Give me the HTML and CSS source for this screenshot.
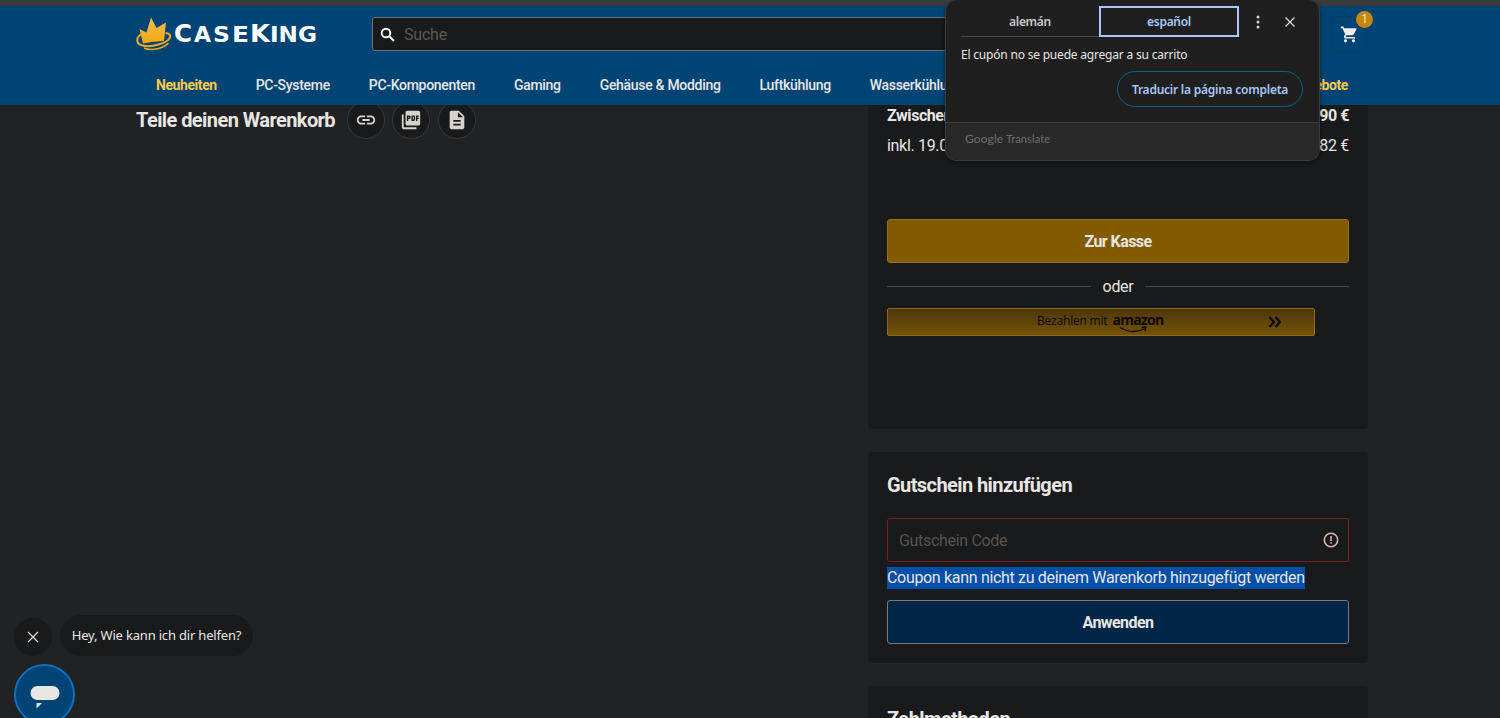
FILE: index.html
```
<!DOCTYPE html>
<html lang="de">
<head>
    <meta charset="UTF-8">
    <meta name="viewport" content="width=device-width, initial-scale=1.0">
    <title>Warenkorb - Caseking</title>
    <link rel="stylesheet" href="styles.css">
</head>
<body>
    <header class="header">
        <div class="header-top">
            <a class="logo">
                <svg width="182" height="36" viewBox="0 0 182 36">
                    <defs>
                        <linearGradient id="gold" x1="0" y1="0" x2="0" y2="1">
                            <stop offset="0" stop-color="#f0bc55"/>
                            <stop offset="1" stop-color="#f5a80c"/>
                        </linearGradient>
                    </defs>
                    <path fill="url(#gold)" d="M7 27.500 L3.500 13 L10.500 16.500 L15 1.500 L20.500 12 L30 6.500 L28 25 Q17 25 7 27.500Z"/>
                    <path fill="none" stroke="#efab1c" stroke-width="2" d="M5.500 18 C-0.500 22 0 28 6.500 29.500 C15 32 32 27 34 21.500 C35 19 32.500 17 29.500 17"/>
                    <path fill="none" stroke="#efab1c" stroke-width="1.500" d="M8 32 C16 35.500 28 32 32.500 27"/>
                    <g class="logo-text">
                        <text x="38" y="25.500" font-size="25" textLength="18" lengthAdjust="spacingAndGlyphs">C</text>
                        <text x="58" y="25.500" font-size="21" textLength="17" lengthAdjust="spacingAndGlyphs">A</text>
                        <text x="77" y="25.500" font-size="21" textLength="17" lengthAdjust="spacingAndGlyphs">S</text>
                        <text x="96" y="25.500" font-size="21" textLength="17" lengthAdjust="spacingAndGlyphs">E</text>
                        <text x="114" y="25.500" font-size="25" textLength="20" lengthAdjust="spacingAndGlyphs">K</text>
                        <text x="134" y="25.500" font-size="21" textLength="47" lengthAdjust="spacingAndGlyphs">ING</text>
                    </g>
                </svg>
            </a>
            <div class="search">
                <svg width="16" height="16" viewBox="0 0 16 16" fill="none" stroke="#fff" stroke-width="1.900"><circle cx="6" cy="7" r="4.300"/><path d="M9 10 L14 15"/></svg>
                <span>Suche</span>
            </div>
            <a class="cart">
                <svg width="19" height="19" viewBox="0 0 24 24" fill="#f0eeea"><path d="M7 18c-1.100 0-1.990.9-1.990 2S5.900 22 7 22s2-.9 2-2-.9-2-2-2zM1 2v2h2l3.600 7.590-1.350 2.450c-.16.280-.25.610-.25.960 0 1.100.9 2 2 2h12v-2H7.420c-.14 0-.25-.11-.25-.25l.03-.12.9-1.630h7.450c.75 0 1.410-.41 1.750-1.030l3.580-6.490A1 1 0 0 0 20 4H5.210l-.94-2H1zm16 16c-1.100 0-1.990.9-1.990 2s.89 2 1.990 2 2-.9 2-2-.9-2-2-2z"/></svg>
                <span class="badge">1</span>
            </a>
        </div>
        <nav class="nav">
            <a class="highlight">Neuheiten</a>
            <a>PC-Systeme</a>
            <a>PC-Komponenten</a>
            <a>Gaming</a>
            <a>Gehäuse &amp; Modding</a>
            <a>Luftkühlung</a>
            <a>Wasserkühlung</a>
            <a class="highlight last">Angebote</a>
        </nav>
    </header>

    <main class="main">
        <section class="share">
            <h2>Teile deinen Warenkorb</h2>
            <button class="round"><svg width="22" height="22" viewBox="0 0 24 24"><path d="M3.900 12c0-1.710 1.390-3.100 3.100-3.100h4V7H7c-2.760 0-5 2.240-5 5s2.240 5 5 5h4v-1.900H7c-1.710 0-3.100-1.390-3.100-3.100zM8 13h8v-2H8v2zm9-6h-4v1.900h4c1.710 0 3.100 1.390 3.100 3.100s-1.390 3.100-3.100 3.100h-4V17h4c2.760 0 5-2.240 5-5s-2.240-5-5-5z"/></svg></button>
            <button class="round"><svg width="22" height="22" viewBox="0 0 24 24"><path d="M20 2H8c-1.100 0-2 .9-2 2v12c0 1.100.9 2 2 2h12c1.100 0 2-.9 2-2V4c0-1.100-.9-2-2-2zm-8.500 7.500c0 .83-.67 1.500-1.500 1.500H9v2H7.500V7H10c.83 0 1.500.67 1.500 1.500v1zm5 2c0 .83-.67 1.500-1.500 1.500h-2.500V7H15c.83 0 1.500.67 1.500 1.500v3zm4-3H19v1h1.500V11H19v2h-1.500V7h3v1.500zM9 9.500h1v-1H9v1zM4 6H2v14c0 1.100.9 2 2 2h14v-2H4V6zm10 5.500h1v-3h-1v3z"/></svg></button>
            <button class="round"><svg width="22" height="22" viewBox="0 0 24 24"><path d="M14 2H6c-1.100 0-1.990.9-1.990 2L4 20c0 1.100.89 2 1.990 2H18c1.100 0 2-.9 2-2V8l-6-6zm2 16H8v-2h8v2zm0-4H8v-2h8v2zm-3-5V3.500L18.500 9H13z"/></svg></button>
        </section>

        <aside class="sidebar">
            <section class="card summary">
                <div class="row total"><span>Zwischensumme</span><span>90 €</span></div>
                <div class="row"><span>inkl. 19.0%</span><span>82 €</span></div>
                <button class="btn checkout">Zur Kasse</button>
                <div class="divider">oder</div>
                <button class="amazon">
                    <span class="amazon-label">Bezahlen mit</span>
                    <span class="amazon-logo">amazon<svg width="30" height="7" viewBox="0 0 30 7" fill="none" stroke="#0c0a05" stroke-width="1.300"><path d="M1 1.500 Q14 9 26 2.500 M22.500 1.500 L27 1 L26 5"/></svg></span>
                    <svg class="amazon-arrows" width="14" height="12" viewBox="0 0 14 12" fill="none" stroke="#0c0a05" stroke-width="2.200"><path d="M1.500 1 L6 6 L1.500 11 M7.500 1 L12 6 L7.500 11"/></svg>
                </button>
            </section>

            <section class="card coupon">
                <h2>Gutschein hinzufügen</h2>
                <div class="input">
                    <span>Gutschein Code</span>
                    <svg width="16" height="16" viewBox="0 0 16 16" fill="none" stroke="#e6b3b5" stroke-width="1.500"><circle cx="8" cy="8" r="6.700"/><path d="M8 4 V9 M8 10.200 V11.800"/></svg>
                </div>
                <p class="error"><span>Coupon kann nicht zu deinem Warenkorb hinzugefügt werden</span></p>
                <button class="btn apply">Anwenden</button>
            </section>

            <section class="card">
                <h2>Zahlmethoden</h2>
            </section>
        </aside>
    </main>

    <div class="translate">
        <div class="tabs">
            <span class="tab">alemán</span>
            <span class="tab active">español</span>
            <svg class="dots" width="4" height="14" viewBox="0 0 4 14" fill="#d5d5d5"><circle cx="2" cy="2" r="1.500"/><circle cx="2" cy="7" r="1.500"/><circle cx="2" cy="12" r="1.500"/></svg>
            <svg class="close" width="10" height="10" viewBox="0 0 10 10" stroke="#d5d5d5" stroke-width="1.300"><path d="M.5 .5 L9.500 9.500 M9.500 .5 L.5 9.500"/></svg>
        </div>
        <p class="translation">El cupón no se puede agregar a su carrito</p>
        <button class="translate-page">Traducir la página completa</button>
        <div class="translate-footer"><span class="google">Google</span> <span>Translate</span></div>
    </div>

    <div class="chat">
        <div class="chat-row">
            <button class="chat-close"><svg width="12" height="12" viewBox="0 0 12 12" stroke="#e0ddd8" stroke-width="1.200"><path d="M1 1 L11 11 M11 1 L1 11"/></svg></button>
            <div class="chat-message">Hey, Wie kann ich dir helfen?</div>
        </div>
        <button class="chat-open">
            <svg width="30" height="24" viewBox="0 0 30 24" fill="#e8e6e3"><rect x="0.500" y="1" width="29" height="14" rx="7"/><path d="M6.500 18 H12 L6.500 23.500Z"/></svg>
        </button>
    </div>
</body>
</html>
```
FILE: styles.css
```
* {
    box-sizing: border-box;
}
body {
    margin: 0;
    height: 718px;
    overflow: hidden;
    font-family: Roboto, sans-serif;
    font-size: 16px;
    letter-spacing: -0.32px;
    color: #e8e6e3;
    background: #202223;
    border-top: 6px solid #3b3b3d;
}
button {
    padding: 0;
    font-family: inherit;
    letter-spacing: inherit;
    color: inherit;
}
h2 {
    margin: 0;
    font-size: 20px;
    line-height: 24px;
    font-weight: 700;
    letter-spacing: -0.58px;
}

/* header */
.header {
    position: relative;
    z-index: 1;
    height: 99px;
    background: #004475;
}
.header-top {
    display: flex;
    align-items: center;
    width: 1231px;
    height: 56px;
    margin: 0 auto 0 136px;
}
.logo {
    width: 236px;
    height: 36px;
}
.logo-text {
    font-family: "DejaVu Sans", sans-serif;
    font-weight: 700;
    letter-spacing: 0;
    fill: #fff;
}
.search {
    display: flex;
    align-items: center;
    gap: 8px;
    width: 800px;
    height: 34px;
    padding-left: 7px;
    border: 1px solid #6d7479;
    border-radius: 3px;
    background: #181a1b;
    color: #5c5955;
    letter-spacing: -0.2px;
}
.cart {
    position: relative;
    display: flex;
    align-items: center;
    justify-content: center;
    width: 36px;
    height: 36px;
    margin-left: auto;
    border: 1px solid #0c3c62;
    border-radius: 4px;
}
.badge {
    position: absolute;
    top: -6px;
    right: -7px;
    width: 17px;
    height: 17px;
    border-radius: 50%;
    background: #c38804;
    font-size: 12px;
    line-height: 17px;
    text-align: center;
}
.nav {
    display: flex;
    gap: 38.900px;
    width: 1192px;
    margin-left: 156px;
    padding-top: 14px;
    font-size: 14px;
    line-height: 18px;
    font-weight: 500;
    letter-spacing: -0.3px;
}
.highlight {
    color: #ffc94a;
    font-weight: 700;
    letter-spacing: -0.42px;
}
.last {
    margin-left: auto;
}

/* content */
.main {
    display: flex;
    justify-content: space-between;
    width: 1232px;
    margin: -5px 0 0 136px;
}
.share {
    display: flex;
    align-items: center;
    gap: 7.700px;
    height: 40px;
}
.share h2 {
    width: 203px;
    white-space: nowrap;
}
.round {
    display: flex;
    align-items: center;
    justify-content: center;
    width: 38px;
    height: 38px;
    border: 1px solid #36393b;
    border-radius: 50%;
    background: #181a1b;
    fill: #d6d2cd;
}
.sidebar {
    display: flex;
    flex-direction: column;
    gap: 23px;
    width: 500px;
}
.card {
    padding: 21px 19px 19px;
    border-radius: 4px;
    background: #181a1b;
}
.summary {
    height: 329px;
    padding-top: 1px;
}
.row {
    display: flex;
    justify-content: space-between;
    line-height: 30px;
}
.total {
    font-weight: 700;
    letter-spacing: -0.45px;
}
.btn {
    display: block;
    width: 100%;
    height: 44px;
    border-radius: 3px;
    font-size: 16px;
    font-weight: 700;
    letter-spacing: -0.55px;
}
.checkout {
    margin-top: 58px;
    border: 1px solid #96711a;
    background: #825b00;
}
.divider {
    display: flex;
    align-items: center;
    gap: 12px;
    height: 28px;
    margin: 9px 0 8px;
}
.divider::before,
.divider::after {
    content: "";
    flex: 1;
    height: 1px;
    background: #45484a;
}
.amazon {
    display: flex;
    align-items: center;
    width: 428px;
    height: 28px;
    padding-left: 149px;
    border: 1px solid #8f6a18;
    border-radius: 2px;
    background: linear-gradient(#4d370b, #755207);
    color: #0c0a05;
}
.amazon-label {
    font-family: "Open Sans", sans-serif;
    font-size: 12px;
    font-weight: 500;
    line-height: 20px;
    letter-spacing: -0.2px;
    margin: -2px 5px 0 0;
}
.amazon-logo {
    position: relative;
    font-family: "Open Sans", sans-serif;
    font-size: 14px;
    font-weight: 700;
    line-height: 18px;
    letter-spacing: -0.7px;
    margin-top: -4px;
}
.amazon-logo svg {
    position: absolute;
    left: 7px;
    top: 15px;
}
.amazon-arrows {
    margin-left: auto;
    margin-right: 32px;
}
.input {
    display: flex;
    align-items: center;
    justify-content: space-between;
    height: 44px;
    margin-top: 21px;
    padding: 0 9px 0 11px;
    border: 1px solid #7c1b24;
    border-radius: 3px;
    color: #57544f;
}
.error {
    margin: 5px 0 11px;
    line-height: 22px;
    white-space: nowrap;
}
.error span {
    display: inline-block;
    background: #004fa9;
}
.apply {
    border: 1px solid #74797a;
    background: #002548;
}

/* translate popup */
.translate {
    position: absolute;
    z-index: 2;
    left: 945px;
    top: 0;
    width: 375px;
    height: 161px;
    padding-top: 6px;
    border: 1px solid #3c3c3c;
    border-top: 0;
    border-radius: 12px;
    background: #1f1f1f;
    box-shadow: 0 1px 4px rgba(0, 0, 0, 0.5);
    font-family: "Noto Sans", sans-serif;
    font-size: 12px;
    letter-spacing: -0.2px;
    overflow: hidden;
}
.tabs {
    display: flex;
    align-items: center;
    padding-left: 15px;
}
.tab {
    width: 138px;
    height: 31px;
    border-bottom: 1px solid #47484a;
    line-height: 32px;
    font-weight: 600;
    text-align: center;
    color: #c9c9c9;
    letter-spacing: -0.3px;
}
.active {
    width: 140px;
    border: 2px solid #a8c7fa;
    line-height: 28px;
    color: #a8c7fa;
}
.dots {
    margin-left: 17px;
}
.close {
    margin-left: 25px;
}
.translation {
    margin: 9px 0 8px 15px;
    line-height: 17px;
}
.translate-page {
    display: block;
    width: 186px;
    height: 36px;
    margin: 0 0 15px 171px;
    border: 1px solid #07638c;
    border-radius: 18px;
    background: none;
    font-size: 12px;
    font-weight: 600;
    letter-spacing: -0.24px;
    color: #a8c7fa;
}
.translate-footer {
    height: 39px;
    padding-left: 19px;
    border-top: 1px solid #3c3c3c;
    background: #282828;
    font-family: Lato, sans-serif;
    font-size: 11px;
    line-height: 32px;
    letter-spacing: 0.1px;
    color: #6f6f6f;
}
.google {
    font-size: 12px;
}

/* chat */
.chat {
    position: absolute;
    left: 14px;
    top: 615px;
    height: 103px;
    overflow: hidden;
}
.chat-row {
    display: flex;
    align-items: center;
    gap: 8px;
    height: 41px;
}
.chat-close {
    display: flex;
    align-items: center;
    justify-content: center;
    width: 38px;
    height: 38px;
    margin-top: 3px;
    border: 0;
    border-radius: 50%;
    background: #181a1b;
}
.chat-message {
    width: 193px;
    height: 41px;
    border-radius: 21px;
    background: #181a1b;
    font-family: "Noto Sans", sans-serif;
    font-size: 13px;
    line-height: 41px;
    letter-spacing: -0.18px;
    text-align: center;
}
.chat-open {
    display: flex;
    align-items: center;
    justify-content: center;
    width: 61px;
    height: 61px;
    margin-top: 8px;
    padding-top: 4px;
    border: 2px solid #0b6fc2;
    border-radius: 50%;
    background: #004475;
}
```
